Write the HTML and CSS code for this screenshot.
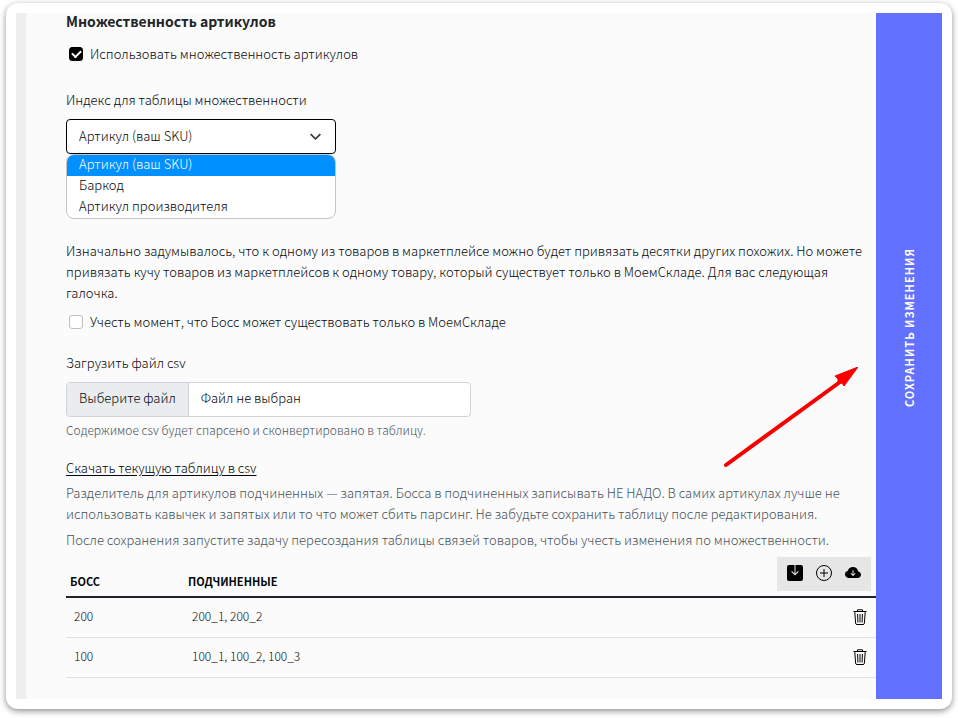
FILE: index.html
```html
<!DOCTYPE html>
<html lang="ru">
<head>
<meta charset="utf-8">
<meta name="viewport" content="width=device-width, initial-scale=1">
<title>Множественность артикулов</title>
<link rel="stylesheet" href="styles.css">
</head>
<body>
<div class="window">
  <main class="content">
    <h1 class="title">Множественность артикулов</h1>
    <label class="check"><input type="checkbox" checked><span>Использовать множественность артикулов</span></label>

    <div class="field index-field">
      <label class="field-label" for="index">Индекс для таблицы множественности</label>
      <div class="select-wrap">
        <select id="index" class="select">
          <option>Артикул (ваш SKU)</option>
          <option>Баркод</option>
          <option>Артикул производителя</option>
        </select>
        <svg class="chevron" viewBox="0 0 16 16" aria-hidden="true"><path d="M2 5l6 6 6-6"/></svg>
      </div>
      <ul class="options" role="listbox" aria-label="Индекс">
        <li class="option selected" role="option" aria-selected="true">Артикул (ваш SKU)</li>
        <li class="option" role="option" aria-selected="false">Баркод</li>
        <li class="option" role="option" aria-selected="false">Артикул производителя</li>
      </ul>
    </div>

    <p class="text">Изначально задумывалось, что к одному из товаров в маркетплейсе можно будет привязать десятки других похожих. Но можете привязать кучу товаров из маркетплейсов к одному товару, который существует только в МоемСкладе. Для вас следующая галочка.</p>
    <label class="check boss-check"><input type="checkbox"><span>Учесть момент, что Босс может существовать только в МоемСкладе</span></label>

    <div class="field file-field">
      <label class="field-label" for="csv">Загрузить файл csv</label>
      <label class="file">
        <input id="csv" class="file-input" type="file" accept=".csv">
        <span class="file-button">Выберите файл</span>
        <span class="file-name">Файл не выбран</span>
      </label>
      <p class="help">Содержимое csv будет спарсено и сконвертировано в таблицу.</p>
    </div>

    <a class="download" href="#">Скачать текущую таблицу в csv</a>
    <p class="text muted">Разделитель для артикулов подчиненных — запятая. Босса в подчиненных записывать НЕ НАДО. В самих артикулах лучше не использовать кавычек и запятых или то что может сбить парсинг. Не забудьте сохранить таблицу после редактирования.</p>
    <p class="text muted last">После сохранения запустите задачу пересоздания таблицы связей товаров, чтобы учесть изменения по множественности.</p>

    <table class="table">
      <thead>
        <tr>
          <th class="col-boss" scope="col">Босс</th>
          <th scope="col">Подчиненные</th>
          <th class="col-tools">
            <div class="tools">
              <button class="icon-button" type="button" aria-label="Сохранить"><svg viewBox="0 0 16 16"><path d="M2 0h5.500v8.500L5 6l-.8.8L8 10.600l3.800-3.800L11 6 8.500 8.500V0H14a2 2 0 0 1 2 2v12a2 2 0 0 1-2 2H2a2 2 0 0 1-2-2V2a2 2 0 0 1 2-2z"/></svg></button>
              <button class="icon-button" type="button" aria-label="Добавить"><svg viewBox="0 0 16 16"><g class="line"><circle cx="8" cy="8" r="7.5"/><path d="M8 4v8M4 8h8"/></g></svg></button>
              <button class="icon-button" type="button" aria-label="Загрузить"><svg viewBox="0 0 16 16"><path fill-rule="evenodd" d="M8 2a5.53 5.53 0 0 0-3.594 1.342c-.766.66-1.321 1.52-1.464 2.383C1.266 6.095 0 7.555 0 9.318 0 11.366 1.708 13 3.781 13h8.906C14.502 13 16 11.57 16 9.773c0-1.636-1.242-2.969-2.834-3.194C12.923 3.999 10.69 2 8 2zm2.354 6.854-2 2a.5.5 0 0 1-.708 0l-2-2a.5.5 0 1 1 .708-.708L7.5 9.293V5.5a.5.5 0 0 1 1 0v3.793l1.146-1.147a.5.5 0 0 1 .708.708z"/></svg></button>
            </div>
          </th>
        </tr>
      </thead>
      <tbody>
        <tr>
          <td>200</td>
          <td>200_1, 200_2</td>
          <td class="remove"><button class="icon-button" type="button" aria-label="Удалить 200"><svg viewBox="0 0 16 16"><g class="line"><path d="M1.5 2.5h13M5.5 2V.8h5V2M2.800 3l.8 11.200a1.400 1.400 0 0 0 1.400 1.300h6a1.400 1.400 0 0 0 1.400-1.300L13.200 3M5.600 5l.3 8.500M8 5v8.500M10.400 5l-.3 8.500"/></g></svg></button></td>
        </tr>
        <tr>
          <td>100</td>
          <td>100_1, 100_2, 100_3</td>
          <td class="remove"><button class="icon-button" type="button" aria-label="Удалить 100"><svg viewBox="0 0 16 16"><g class="line"><path d="M1.5 2.5h13M5.5 2V.8h5V2M2.800 3l.8 11.200a1.400 1.400 0 0 0 1.400 1.300h6a1.400 1.400 0 0 0 1.400-1.300L13.200 3M5.600 5l.3 8.500M8 5v8.500M10.400 5l-.3 8.500"/></g></svg></button></td>
        </tr>
      </tbody>
    </table>
    <svg class="arrow" viewBox="0 0 136 102" aria-hidden="true"><path class="shaft" d="M4 98L118 15"/><path class="head" d="M136 0L113 9l3 3 0 4 4 0 2 3z"/></svg>
  </main>
  <button class="save" type="button"><span>Сохранить изменения</span></button>
</div>
</body>
</html>
```
FILE: styles.css
```css
* {
  box-sizing: border-box;
}

body {
  margin: 0;
  padding: 3px 6px 9px;
  background: #fff;
  color: #05080a;
  font: 300 13px/21px "Noto Sans CJK SC", "Noto Sans", sans-serif;
}

button,
select {
  font: inherit;
  color: inherit;
}

.window {
  display: flex;
  padding: 10px;
  border-radius: 12px;
  background: #fff;
  box-shadow: 0 2px 6px rgba(0, 0, 0, 0.45);
}

.content {
  position: relative;
  flex: 1;
  min-width: 0;
  padding: 0 0 21px 40px;
  border-left: 10px solid #eee;
  background: #fbfbfb;
}

.title {
  margin: 0 0 14px;
  color: #212529;
  font-size: 14px;
  line-height: 16px;
}

.check {
  display: flex;
  align-items: center;
  gap: 7px;
  padding-left: 3px;
}

.check input {
  appearance: none;
  width: 14px;
  height: 14px;
  margin: 0;
  border: 1px solid #bfbfbf;
  border-radius: 3px;
  background: #fff;
}

.check input:checked {
  display: grid;
  place-items: center;
  border-color: #000;
  background: #000;
}

.check input:checked::before {
  content: "";
  width: 7px;
  height: 4px;
  margin-bottom: 2px;
  border: solid #fff;
  border-width: 0 0 2px 2px;
  transform: rotate(-45deg);
}

.field-label {
  display: block;
  margin-bottom: 9px;
}

.index-field {
  width: 270px;
  margin: 25px 0 21px;
}

.select-wrap {
  position: relative;
}

.select {
  display: block;
  appearance: none;
  width: 100%;
  height: 35px;
  padding: 0 12px 3px;
  border: 1px solid #000;
  border-radius: 4px;
  background: #fff;
}

.chevron {
  position: absolute;
  top: 11px;
  right: 14px;
  width: 13px;
  height: 13px;
  fill: none;
  stroke: #343a40;
  stroke-width: 2;
}

.options {
  margin: 0;
  padding: 0;
  overflow: hidden;
  border: 1px solid #c4c4c4;
  border-radius: 8px;
  background: #fff;
  list-style: none;
}

.option {
  padding: 0 12px 4px;
  line-height: 17px;
}

.option.selected {
  background: #0090ff;
  color: #fff;
}

.text {
  margin: 0;
  padding-right: 8px;
}

.muted,
.help {
  color: #46525a;
}

.muted {
  margin-top: 4px;
}

.boss-check {
  margin-top: 8px;
}

.file-field {
  margin: 20px 0 17px;
}

.file {
  position: relative;
  display: flex;
  width: 405px;
  height: 35px;
  overflow: hidden;
  border: 1px solid #ced4da;
  border-radius: 4px;
  background: #fff;
  line-height: 30px;
}

.file-input {
  position: absolute;
  inset: 0;
  width: 100%;
  opacity: 0;
}

.file-button {
  padding: 0 12px;
  border-right: 1px solid #ced4da;
  background: #e9edf0;
}

.file-name {
  padding: 0 12px;
}

.help {
  margin: 2px 0 0;
  font-size: 12px;
}

.download {
  color: inherit;
  text-underline-offset: 2px;
}

.last {
  margin: 5px 0 7px;
}

.table {
  width: 100%;
  border-collapse: collapse;
}

.table th {
  height: 40px;
  padding: 10px 4px 0;
  border-bottom: 2px solid #212529;
  font-size: 11px;
  text-align: left;
  text-transform: uppercase;
}

.table td {
  height: 40px;
  padding: 0 8px 3px;
  border-bottom: 1px solid #dee2e6;
  font-size: 12px;
}

.table td.remove {
  padding-bottom: 1px;
}

.table .col-boss {
  width: 118px;
}

.table .col-tools {
  width: 100px;
  padding: 0 5px 5px 0;
}

.tools {
  display: flex;
  justify-content: center;
  gap: 13px;
  width: 94px;
  margin-left: auto;
  padding: 8px 0 10px;
  background: #e6e6e6;
}

.icon-button {
  display: block;
  width: 16px;
  height: 16px;
  padding: 0;
  border: 0;
  background: none;
}

.icon-button svg {
  display: block;
  width: 16px;
  height: 16px;
  fill: #000;
}

.icon-button .line {
  fill: none;
  stroke: #000;
}

.remove .icon-button {
  margin-left: auto;
}

.save {
  display: flex;
  align-items: center;
  justify-content: center;
  width: 66px;
  padding: 0 0 56px;
  border: 0;
  background: #6271ff;
  color: #fff;
  font-size: 11px;
  font-weight: 700;
  letter-spacing: 1px;
  text-transform: uppercase;
}

.save span {
  writing-mode: vertical-rl;
  transform: rotate(180deg);
}

.arrow {
  position: absolute;
  right: 18px;
  bottom: 230px;
  width: 136px;
  height: 102px;
}

.shaft {
  fill: none;
  stroke: #f80000;
  stroke-width: 4;
  stroke-linecap: round;
}

.head {
  fill: #f80000;
  stroke: #f80000;
}
```
